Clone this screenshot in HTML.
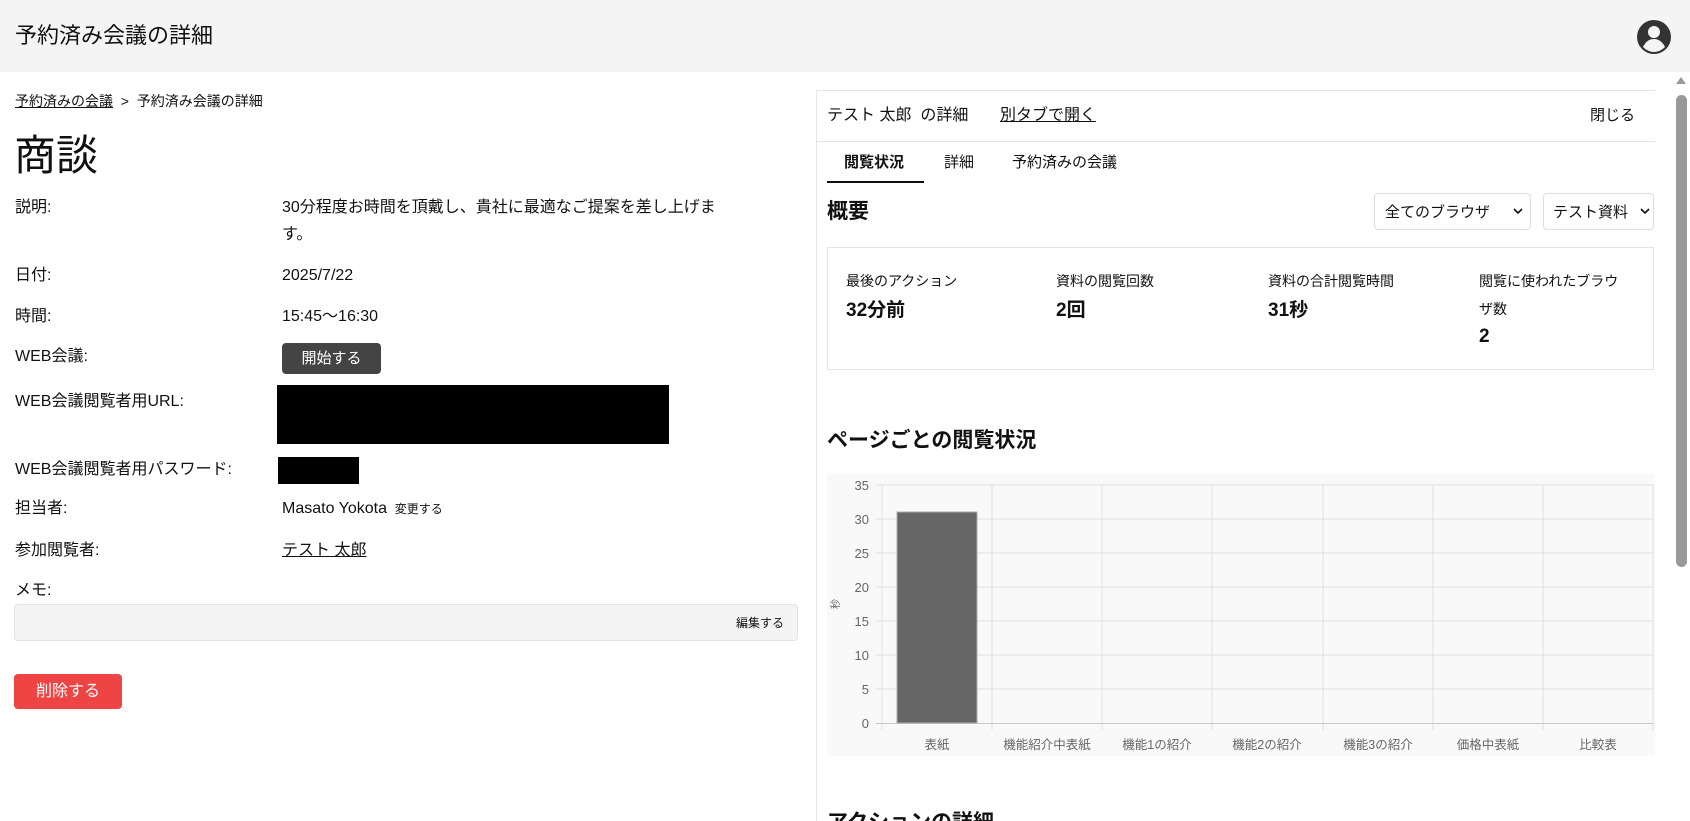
<!DOCTYPE html>
<html style="overflow:hidden;height:821px"><head><meta charset="utf-8"><style>
*{margin:0;padding:0;box-sizing:border-box}
html,body{width:1690px;height:821px;overflow:hidden}
body{background:#fff;font-family:"Liberation Sans","Noto Sans CJK JP",sans-serif;color:#111}
#w{position:relative;width:1690px;height:821px;overflow:hidden}
.a{position:absolute;white-space:nowrap;line-height:1}
.l{font-size:16px}
</style></head><body><div id="w">
<div class="a" style="left:0;top:0;width:1690px;height:72px;background:#f4f4f4"></div>
<div class="a" style="left:15px;top:25px;font-size:22px">予約済み会議の詳細</div>
<svg class="a" style="left:1636px;top:19px" width="36" height="36" viewBox="0 0 36 36"><circle cx="18" cy="18" r="17" fill="#333"/><circle cx="18" cy="13" r="6" fill="#f4f4f4"/><path d="M7 28c3-6 7-8 11-8s8 2 11 8c-3 3-7 5-11 5s-8-2-11-5z" fill="#f4f4f4"/></svg>

<div class="a" style="left:15px;top:94px;font-size:14px"><span style="text-decoration:underline">予約済みの会議</span>&nbsp; &gt; &nbsp;予約済み会議の詳細</div>
<div class="a" style="left:14px;top:135px;font-size:42px">商談</div>

<div class="a l" style="left:15px;top:200px">説明:</div>
<div class="a l" style="left:282px;top:200px;line-height:27px;margin-top:-6px">30分程度お時間を頂戴し、貴社に最適なご提案を差し上げま<br>す。</div>
<div class="a l" style="left:15px;top:268px">日付:</div><div class="a l" style="left:282px;top:268px">2025/7/22</div>
<div class="a l" style="left:15px;top:309px">時間:</div><div class="a l" style="left:282px;top:309px">15:45〜16:30</div>
<div class="a l" style="left:15px;top:349px">WEB会議:</div>
<div class="a" style="left:282px;top:343px;width:99px;height:31px;background:#444;border-radius:4px;color:#fff;font-size:15px;text-align:center;line-height:31px">開始する</div>
<div class="a l" style="left:15px;top:394px">WEB会議閲覧者用URL:</div>
<div class="a" style="left:277px;top:385px;width:392px;height:59px;background:#000"></div>
<div class="a l" style="left:15px;top:462px">WEB会議閲覧者用パスワード:</div>
<div class="a" style="left:278px;top:457px;width:81px;height:27px;background:#000"></div>
<div class="a l" style="left:15px;top:501px">担当者:</div>
<div class="a l" style="left:282px;top:501px">Masato Yokota <span style="font-size:12px">&nbsp;変更する</span></div>
<div class="a l" style="left:15px;top:543px">参加閲覧者:</div>
<div class="a l" style="left:282px;top:543px;text-decoration:underline">テスト 太郎</div>
<div class="a l" style="left:15px;top:583px">メモ:</div>
<div class="a" style="left:14px;top:604px;width:784px;height:37px;background:#f4f4f4;border:1px solid #e3e3e3;border-radius:4px"></div>
<div class="a" style="left:736px;top:617px;font-size:12px">編集する</div>
<div class="a" style="left:14px;top:674px;width:108px;height:35px;background:#ef4444;border-radius:4px;color:#fff;font-size:16px;text-align:center;line-height:35px">削除する</div>

<!-- right panel -->
<div class="a" style="left:816px;top:90px;width:839px;height:731px;border-left:1px solid #e5e5e5;border-top:1px solid #e5e5e5"></div>
<div class="a" style="left:827px;top:108px;font-size:16px">テスト 太郎&nbsp; の詳細</div>
<div class="a" style="left:1000px;top:108px;font-size:16px;text-decoration:underline">別タブで開く</div>
<div class="a" style="left:1590px;top:108px;font-size:15px">閉じる</div>
<div class="a" style="left:817px;top:141px;width:838px;height:1px;background:#e5e5e5"></div>
<div class="a" style="left:844px;top:155px;font-size:15px;font-weight:bold">閲覧状況</div>
<div class="a" style="left:944px;top:155px;font-size:15px">詳細</div>
<div class="a" style="left:1012px;top:155px;font-size:15px">予約済みの会議</div>
<div class="a" style="left:827px;top:181px;width:97px;height:2px;background:#111"></div>
<div class="a" style="left:827px;top:201px;font-size:21px;font-weight:bold">概要</div>
<div class="a" style="left:1374px;top:193px;width:157px;height:37px;border:1px solid #ddd;border-radius:4px;font-size:15px;padding:11px 0 0 10px">全てのブラウザ</div>
<svg class="a" style="left:1513px;top:208px" width="10" height="7"><path d="M1 1l4 4 4-4" fill="none" stroke="#111" stroke-width="1.6"/></svg>
<div class="a" style="left:1543px;top:193px;width:111px;height:37px;border:1px solid #ddd;border-radius:4px;font-size:15px;padding:11px 0 0 9px">テスト資料</div>
<svg class="a" style="left:1640px;top:208px" width="10" height="7"><path d="M1 1l4 4 4-4" fill="none" stroke="#111" stroke-width="1.6"/></svg>
<div class="a" style="left:827px;top:247px;width:827px;height:123px;border:1px solid #e5e5e5"></div>
<div class="a" style="left:846px;top:274px;font-size:14px">最後のアクション</div>
<div class="a" style="left:846px;top:301px;font-size:19px;font-weight:bold">32分前</div>
<div class="a" style="left:1056px;top:274px;font-size:14px">資料の閲覧回数</div>
<div class="a" style="left:1056px;top:301px;font-size:19px;font-weight:bold">2回</div>
<div class="a" style="left:1268px;top:274px;font-size:14px">資料の合計閲覧時間</div>
<div class="a" style="left:1268px;top:301px;font-size:19px;font-weight:bold">31秒</div>
<div class="a" style="left:1479px;top:274px;font-size:14px;line-height:28px;margin-top:-7px">閲覧に使われたブラウ<br>ザ数</div>
<div class="a" style="left:1479px;top:327px;font-size:19px;font-weight:bold">2</div>
<div class="a" style="left:827px;top:430px;font-size:21px;font-weight:bold">ページごとの閲覧状況</div>

<svg class="a" style="left:827px;top:474px" width="828" height="282" viewBox="827 474 828 282" font-family="Liberation Sans, Noto Sans CJK JP, sans-serif">
<rect x="827" y="474" width="828" height="282" fill="#f9f9f9"/>
<g stroke="#dedede" stroke-width="1">
<line x1="876" y1="485" x2="1653" y2="485"/><line x1="876" y1="519" x2="1653" y2="519"/><line x1="876" y1="553" x2="1653" y2="553"/><line x1="876" y1="587" x2="1653" y2="587"/><line x1="876" y1="621" x2="1653" y2="621"/><line x1="876" y1="655" x2="1653" y2="655"/><line x1="876" y1="689" x2="1653" y2="689"/>
<line x1="882" y1="485" x2="882" y2="730"/><line x1="992" y1="485" x2="992" y2="730"/><line x1="1102" y1="485" x2="1102" y2="730"/><line x1="1212" y1="485" x2="1212" y2="730"/><line x1="1323" y1="485" x2="1323" y2="730"/><line x1="1433" y1="485" x2="1433" y2="730"/><line x1="1543" y1="485" x2="1543" y2="730"/><line x1="1653" y1="485" x2="1653" y2="730"/>
</g>
<line x1="876" y1="723.5" x2="1653" y2="723.5" stroke="#c8c8c8"/>
<rect x="897" y="512" width="80" height="211" fill="#666" stroke="#aaa"/>
<g fill="#666" font-size="13" text-anchor="end">
<text x="869" y="490">35</text><text x="869" y="524">30</text><text x="869" y="558">25</text><text x="869" y="592">20</text><text x="869" y="626">15</text><text x="869" y="660">10</text><text x="869" y="694">5</text><text x="869" y="728">0</text>
</g>
<g fill="#666" font-size="12.5" text-anchor="middle">
<text x="937" y="749">表紙</text><text x="1047" y="749">機能紹介中表紙</text><text x="1157" y="749">機能1の紹介</text><text x="1267" y="749">機能2の紹介</text><text x="1378" y="749">機能3の紹介</text><text x="1488" y="749">価格中表紙</text><text x="1598" y="749">比較表</text>
</g>
<text x="0" y="0" font-size="10" fill="#666" transform="translate(839 604) rotate(-90)" text-anchor="middle">秒</text>
</svg>
<div class="a" style="left:827px;top:812px;font-size:21px;font-weight:bold">アクションの詳細</div>

<!-- scrollbar -->
<div class="a" style="left:1673px;top:72px;width:17px;height:749px;background:#fff"></div>
<svg class="a" style="left:1675px;top:76px" width="12" height="9"><path d="M6 1l5 7H1z" fill="#999"/></svg>
<div class="a" style="left:1676px;top:95px;width:11px;height:472px;background:#999;border-radius:6px"></div>
</div></body></html>
